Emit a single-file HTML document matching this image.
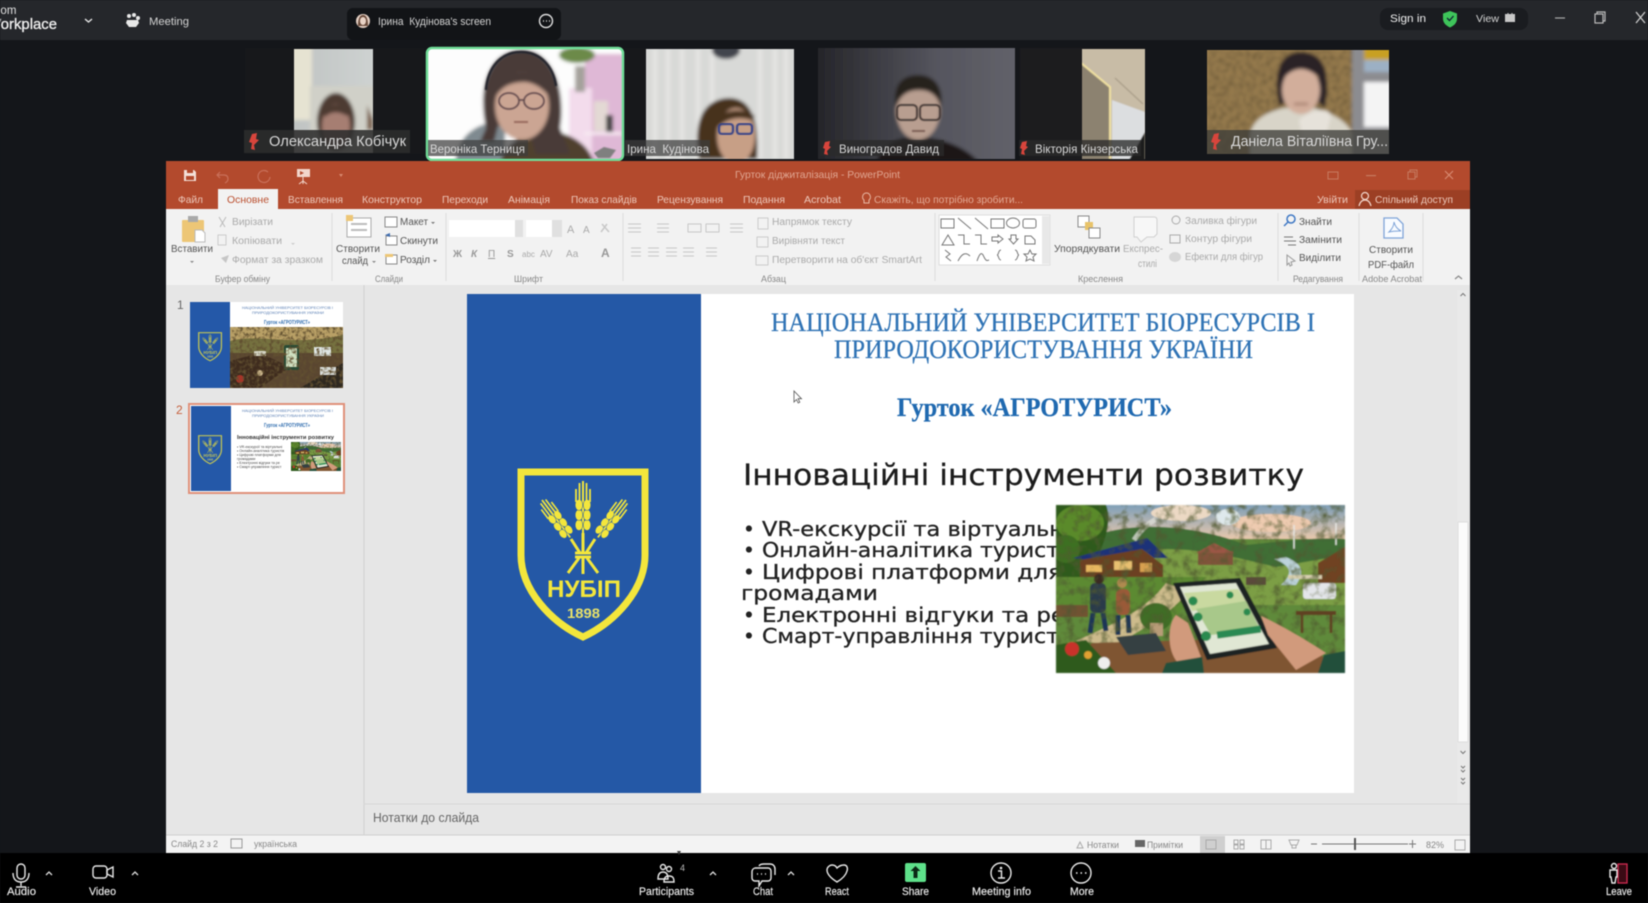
<!DOCTYPE html>
<html lang="uk"><head><meta charset="utf-8"><title>Zoom – PowerPoint</title>
<style>
html,body{margin:0;padding:0;background:#14161a;width:1648px;height:903px;overflow:hidden}
svg{display:block;filter:blur(.55px)}
text{font-family:"Liberation Sans","Noto Sans CJK SC",sans-serif;white-space:pre}
.z{fill:#d4d4d4;font-size:11px}
.w{fill:#f0f0f0;font-size:11px}
.n{fill:#d8d8d8;font-size:12px}
.t{fill:#edc8ba;font-size:10.5px}
.d{fill:#aaa;font-size:10px}
.k{fill:#555;font-size:10px}
.g{fill:#888;font-size:9px}
.s{font-family:"Liberation Serif",serif;fill:#2f73b5;font-size:26px;stroke:#2f73b5;stroke-width:.25}
.b{font-family:"DejaVu Sans",sans-serif;fill:#222;font-size:20px;stroke:#222;stroke-width:.3}
.l{fill:#eee;font-size:11px;stroke:#eee;stroke-width:.15}
.i{fill:none;stroke:#e8e8e8;stroke-width:1.4}
.r{fill:none;stroke:#aaa;stroke-width:1}
.rd{fill:none;stroke:#777;stroke-width:1}
.y{fill:none;stroke:#f3e63c}
</style></head><body>
<svg width="1648" height="903" viewBox="0 0 1648 903" xmlns="http://www.w3.org/2000/svg">
<defs>
<filter id="ph" x="-10%" y="-10%" width="120%" height="120%"><feGaussianBlur stdDeviation="1.8"/></filter>
<filter id="ph2" x="-10%" y="-10%" width="120%" height="120%"><feGaussianBlur stdDeviation=".6"/></filter>
<filter id="mot" x="0" y="0" width="100%" height="100%"><feTurbulence type="fractalNoise" baseFrequency=".11" numOctaves="3" seed="4"/><feColorMatrix values="0 0 0 0 .08  0 0 0 0 .1  0 0 0 0 .03  0 0 0 2.2 -1"/></filter>
<filter id="mot2" x="0" y="0" width="100%" height="100%"><feTurbulence type="fractalNoise" baseFrequency=".3" numOctaves="2" seed="9"/><feColorMatrix values="0 0 0 0 .12  0 0 0 0 .08  0 0 0 0 .03  0 0 0 3 -1.3"/></filter>
<clipPath id="c1"><rect x="294" y="49" width="79" height="104"/></clipPath>
<clipPath id="c2"><rect x="427" y="48" width="196" height="112" rx="5"/></clipPath>
<clipPath id="c3"><rect x="646" y="49" width="148" height="110"/></clipPath>
<clipPath id="c4"><rect x="818" y="48" width="197" height="111"/></clipPath>
<clipPath id="c5"><rect x="1082" y="49" width="63" height="110"/></clipPath>
<clipPath id="c6"><rect x="1207" y="50" width="182" height="104"/></clipPath>
<linearGradient id="sky" x1="0" y1="0" x2="0" y2="1"><stop offset="0" stop-color="#7f9fb8"/><stop offset="1" stop-color="#e8c8ac"/></linearGradient>
<linearGradient id="gr4" x1="0" y1="0" x2="1" y2="0"><stop offset="0" stop-color="#242428"/><stop offset=".6" stop-color="#55555e"/><stop offset="1" stop-color="#62626a"/></linearGradient>
<linearGradient id="wal" x1="0" y1="0" x2="1" y2="0"><stop offset="0" stop-color="#bfc3c2"/><stop offset="1" stop-color="#cfd3d2"/></linearGradient>
<g id="ear">
<path d="M0 0V52" stroke="#f3e63c" stroke-width="2" fill="none"/>
<g fill="#f3e63c" stroke="#2458a6" stroke-width=".5">
<ellipse cx="-4" cy="44" rx="3.8" ry="5.500"/><ellipse cx="4" cy="44" rx="3.800" ry="5.500"/>
<ellipse cx="-4" cy="34" rx="3.800" ry="5.500"/><ellipse cx="4" cy="34" rx="3.800" ry="5.500"/>
<ellipse cx="-4" cy="24" rx="3.800" ry="5.500"/><ellipse cx="4" cy="24" rx="3.800" ry="5.500"/>
</g>
<path d="M-7 21V8M-3.500 19V2M3.500 19V2M7 21V8" stroke="#f3e63c" stroke-width="1.800" fill="none"/>
</g>
<g id="shield">
<path d="M521 472H645V555C645 590 615 622 583 637C551 622 521 590 521 555Z" fill="none" stroke="#f3e63c" stroke-width="7"/>
<use href="#ear" transform="translate(583 481)"/>
<use href="#ear" transform="translate(542 500) rotate(-37) scale(.9)"/>
<use href="#ear" transform="translate(626 500) rotate(37) scale(.9)"/>
<path d="M571 539L580 553M595 539L586 553M583 533V553M575 553H591M575 557H591M579 558L568 573M583 558V574M587 558L598 573" class="y" stroke-width="3"/>
<text x="547" y="597" textLength="74" lengthAdjust="spacingAndGlyphs" style="font-size:24px;font-weight:bold;fill:#f3e63c">НУБІП</text>
<text x="567" y="618" textLength="33" lengthAdjust="spacingAndGlyphs" style="font-size:14px;font-weight:bold;fill:#e8e26a">1898</text>
</g>
<symbol id="scene" viewBox="0 0 289 168" preserveAspectRatio="none">
<rect width="289" height="168" fill="#5f8a3a"/>
<rect width="289" height="34" fill="url(#sky)"/>
<ellipse cx="125" cy="8" rx="30" ry="8" fill="#ecd9c4"/><ellipse cx="215" cy="18" rx="40" ry="9" fill="#eecbb0"/><ellipse cx="172" cy="12" rx="12" ry="8" fill="#dfe9ec"/>
<path d="M40 30C90 14 150 24 190 40C230 36 260 32 289 34V80H40Z" fill="#3f6e36"/>
<path d="M60 50C120 36 170 50 220 62L289 50V100H60Z" fill="#7b9e44"/>
<path d="M218 54C232 60 240 66 225 80L240 80C250 66 245 58 230 52Z" fill="#bcd3da"/>
<path d="M0 0H50C58 20 44 50 30 72H0Z" fill="#2f5a1c"/>
<ellipse cx="24" cy="18" rx="24" ry="18" fill="#5a8a2a"/><ellipse cx="10" cy="44" rx="14" ry="14" fill="#3e6f22"/>
<path d="M78 35C84 26 90 20 100 14" stroke="#dcdcd6" stroke-width="5" fill="none" opacity=".8"/>
<path d="M17 53L91 33L112 53H98L86 44L40 56Z" fill="#1f3278"/>
<path d="M24 55L86 44L107 60V72H24Z" fill="#6c3f20"/>
<rect x="30" y="60" width="16" height="7" fill="#e8b860"/><rect x="58" y="56" width="18" height="9" fill="#e8c070"/><rect x="84" y="58" width="12" height="9" fill="#d8a050"/>
<rect x="142" y="46" width="35" height="14" fill="#80533a"/><path d="M140 48L158 38L178 48Z" fill="#9b5644"/>
<path d="M262 58L289 42V78H262Z" fill="#6f4222"/>
<rect x="247" y="78" width="33" height="16" rx="3" fill="#e4e6ea"/>
<rect x="232" y="70" width="34" height="4" fill="#d8d0b0"/><rect x="190" y="72" width="20" height="8" fill="#5a4a3a"/>
<path d="M238 20V44M280 18V40" stroke="#e8e8e4" stroke-width="1.500"/>
<path d="M0 72H150L120 112H0Z" fill="#5c8a30"/>
<path d="M110 78C90 105 60 118 20 136L60 140C90 122 120 105 132 86Z" fill="#cdbb8c"/>
<path d="M0 100H32V112H0Z" fill="#6f5233"/>
<rect x="34" y="78" width="16" height="30" rx="5" fill="#2a3a4a"/><circle cx="43" cy="74" r="5" fill="#3a2a20"/><path d="M37 108L34 128M47 108L50 126" stroke="#1d3556" stroke-width="5"/>
<rect x="60" y="84" width="14" height="26" rx="5" fill="#9a5a38"/><circle cx="66" cy="78" r="5" fill="#b08a50"/><path d="M62 110L62 130M72 110L73 128" stroke="#1d3556" stroke-width="5"/>
<ellipse cx="100" cy="112" rx="16" ry="14" fill="#3f6d25"/><rect x="94" y="118" width="13" height="13" fill="#b89c78"/>
<rect width="289" height="168" filter="url(#mot)"/>
<path d="M36 138L240 132L289 168H0Z" fill="#7f5530"/>
<path d="M0 140L30 135L60 168H0Z" fill="#2f5a1c"/>
<circle cx="16" cy="144" r="7" fill="#c8322a"/><circle cx="32" cy="150" r="4" fill="#e0a030"/><circle cx="48" cy="158" r="6" fill="#eee"/>
<path d="M60 132L100 128L110 146L72 150Z" fill="#343f42"/>
<path d="M117 78L184 73L221 143L151 155Z" fill="#1c2024"/>
<path d="M124 82L180 78L213 139L154 149Z" fill="#e0e7d4"/>
<path d="M128 88L182 84L192 100L136 106Z" fill="#c9d9a0"/>
<path d="M140 104L190 96L204 124L155 130Z" fill="#a8c88a"/>
<circle cx="137" cy="96" r="4.500" fill="#2c8a50"/><circle cx="142" cy="112" r="4.500" fill="#2c8a50"/><circle cx="150" cy="131" r="5" fill="#2c8a50"/>
<rect x="161" y="124" width="44" height="7" fill="#2b8a52" transform="rotate(-8 180 128)"/>
<circle cx="174" cy="90" r="3.500" fill="#2c8a50"/><circle cx="191" cy="107" r="3.500" fill="#2c8a50"/>
<path d="M120 110C112 118 110 145 122 158L145 152L132 118Z" fill="#d19a7c"/>
<path d="M205 111C225 120 250 135 270 148L240 165L212 130Z" fill="#d19a7c"/>
<path d="M110 158L146 152L148 168H106ZM268 150L289 146V168H262Z" fill="#24503a"/>
<rect x="240" y="106" width="40" height="4" fill="#5f3f22"/><path d="M246 110V128M275 110V128" stroke="#5f3f22" stroke-width="2.500"/>
</symbol>
<symbol id="scene1" viewBox="0 0 113 61" preserveAspectRatio="none">
<rect width="113" height="61" fill="#5a4630"/>
<rect width="113" height="14" fill="#b9a066"/>
<path d="M0 14C30 6 60 20 113 8V26H0Z" fill="#75713f"/>
<path d="M0 34L30 26L60 40L30 61H0Z" fill="#3f2c1e"/>
<path d="M70 61L113 36V61Z" fill="#2e2820"/>
<circle cx="10" cy="52" r="4" fill="#a83428"/><circle cx="30" cy="46" r="3" fill="#c9b48a"/>
<rect x="54" y="18" width="15" height="25" rx="2" fill="#264a34"/><rect x="56" y="21" width="11" height="19" fill="#cfe0c0"/>
<rect x="84" y="20" width="17" height="9" fill="#dfe6e4"/><rect x="90" y="40" width="16" height="8" fill="#d8dcda"/>
<rect x="24" y="24" width="12" height="5" fill="#d8d8c8"/>
<rect width="113" height="61" filter="url(#mot2)"/>
</symbol>
</defs>

<!-- background -->
<rect width="1648" height="903" fill="#14161a"/>
<rect width="1648" height="40" fill="#25272b"/>
<rect x="347" y="8" width="214" height="32" rx="6" fill="#121417"/>
<rect x="1380" y="8" width="148" height="22" rx="8" fill="#1a1c20"/>

<!-- top bar -->
<text x="-13" y="14" style="font-size:11.500px;fill:#e0e0e0">Zoom</text>
<text x="-13" y="29" textLength="70" lengthAdjust="spacingAndGlyphs" style="font-size:14.500px;fill:#f0f0f0;stroke:#f0f0f0;stroke-width:.3">Workplace</text>
<path d="M85 19l3.500 3 3.500-3" class="i"/>
<g fill="#e8e8e8"><circle cx="129" cy="16" r="2"/><circle cx="134" cy="15" r="2"/><circle cx="138" cy="18" r="2"/><path d="M127 20h11l1 3-3 4h-7l-3-4z"/></g>
<text x="149" y="25" class="z" textLength="40" lengthAdjust="spacingAndGlyphs">Meeting</text>
<circle cx="363" cy="21" r="7" fill="#e3cfc3"/><path d="M358 26c0-8 2-11 5-11s5 3 5 11" fill="#694a3a"/><ellipse cx="363" cy="21" rx="3" ry="4" fill="#e8d2c5"/>
<text x="378" y="25" class="z" textLength="113" lengthAdjust="spacingAndGlyphs">Ірина  Кудінова's screen</text>
<circle cx="546" cy="21" r="6.500" fill="none" stroke="#ddd" stroke-width="1.400"/><path d="M543 21h1M546 21h1M549 21h1" stroke="#ddd" stroke-width="1.400"/>
<text x="1390" y="22" class="w" textLength="36" lengthAdjust="spacingAndGlyphs">Sign in</text>
<path d="M1450 11l7 2.500v5c0 4.500-3 7-7 9-4-2-7-4.500-7-9v-5z" fill="#3ec45a"/><path d="M1447 18l2.500 2.500 4-4.500" fill="none" stroke="#123" stroke-width="1.300"/>
<text x="1476" y="22" class="z" style="font-size:10px" textLength="23" lengthAdjust="spacingAndGlyphs">View</text>
<rect x="1505" y="14" width="10" height="8" fill="#c8c8c8"/><path d="M1508 13v2M1512 13v2" stroke="#c8c8c8" stroke-width="1"/>
<path d="M1555 18h10" stroke="#aaa" stroke-width="1.200"/>
<rect x="1595" y="14" width="8" height="9" fill="none" stroke="#bbb" stroke-width="1.200"/><path d="M1597 14v-2h8v9h-2" fill="none" stroke="#bbb" stroke-width="1.200"/>
<path d="M1636 12l9 11M1645 12l-9 11" stroke="#ccc" stroke-width="1.300"/>

<!-- tile 1 -->
<rect x="245" y="48" width="179" height="106" fill="#17181b"/>
<g clip-path="url(#c1)"><g filter="url(#ph)">
<rect x="290" y="45" width="90" height="112" fill="url(#wal)"/>
<rect x="288" y="45" width="24" height="75" fill="#e6e3d2"/>
<rect x="310" y="86" width="70" height="70" fill="#d0d0c8"/>
<ellipse cx="336" cy="122" rx="19" ry="29" fill="#4e3a30"/><ellipse cx="336" cy="126" rx="14" ry="22" fill="#a67e72"/>
<path d="M323 112c6-10 20-10 27-1l-3 5c-8-5-16-5-22 1z" fill="#4e3a30"/>
<path d="M367 105l6 15v10h-6z" fill="#7c6250"/>
</g></g>
<!-- tile 2 -->
<g clip-path="url(#c2)"><g filter="url(#ph)">
<rect x="423" y="44" width="204" height="120" fill="#fdfdfd"/>
<rect x="585" y="54" width="42" height="110" fill="#dfb8d6"/>
<rect x="569" y="88" width="23" height="74" fill="#f3dcec"/>
<rect x="575" y="66" width="10" height="26" fill="#a5a29c"/>
<ellipse cx="577" cy="55" rx="18" ry="8" fill="#6c8a48"/>
<rect x="594" y="101" width="14" height="30" fill="#e3d9d4"/><rect x="606" y="115" width="7" height="17" fill="#444"/><rect x="584" y="132" width="38" height="3" fill="#f7eaf2"/>
<path d="M455 164c2-22 12-34 30-40h20v40z" fill="#7f8a90"/>
<path d="M500 164c4-20 20-30 48-34 26 4 42 16 46 34z" fill="#50402f"/>
<path d="M486 128c-8-36 0-78 36-78 32 0 44 42 38 78l10 26h-34l-8-28h-30l-4 16h-14z" fill="#4a3b38"/>
<ellipse cx="522" cy="106" rx="27" ry="34" fill="#cba593"/>
<path d="M496 96c3-16 14-24 26-24s23 8 27 24c-8-10-18-14-25-14-12 0-22 4-28 14z" fill="#4a3b38"/>
</g>
<g filter="url(#ph2)">
<g fill="none" stroke="#5c4448" stroke-width="1.500"><ellipse cx="509" cy="101" rx="10" ry="8"/><ellipse cx="534" cy="101" rx="10" ry="8"/><path d="M519 100h5"/></g>
<path d="M514 122h14" stroke="#996a5e" stroke-width="2"/>
<path d="M486 90c2-24 16-38 35-38s32 14 35 34" fill="none" stroke="#23242a" stroke-width="2.500"/>
<path d="M594 153l10-6 12 3-6 8h-12z" fill="#7f7f7f"/>
</g></g>
<rect x="427" y="48" width="196" height="112" rx="5" fill="none" stroke="#70dd98" stroke-width="2.500"/>
<!-- tile 3 -->
<rect x="625" y="48" width="22" height="112" fill="#17181b"/>
<g clip-path="url(#c3)"><g filter="url(#ph)">
<rect x="642" y="45" width="156" height="118" fill="#d8d9d7"/>
<path d="M655 49v110M668 49v110M682 49v110M698 49v110M712 49v110M760 49v110M775 49v110M786 49v110" stroke="#e6e6e4" stroke-width="4"/>
<ellipse cx="726" cy="50" rx="14" ry="9" fill="#43454e"/>
<path d="M699 159c-6-34 2-60 30-61 24 0 30 26 28 61z" fill="#46301f"/>
<ellipse cx="736" cy="136" rx="19" ry="28" fill="#c79f86"/>
<path d="M715 122c6-12 26-16 40-6l-4 4c-12-4-24-2-34 8z" fill="#46301f"/>
</g>
<g filter="url(#ph2)"><g fill="none" stroke="#2a3b88" stroke-width="2"><rect x="719" y="124" width="14" height="10" rx="3"/><rect x="737" y="124" width="15" height="10" rx="3"/></g></g></g>
<!-- tile 4 -->
<g clip-path="url(#c4)"><g filter="url(#ph)">
<rect x="814" y="44" width="205" height="120" fill="url(#gr4)"/>
<path d="M876 162c6-16 18-22 28-24h26c18 3 36 10 49 24z" fill="#1c1917"/>
<ellipse cx="918" cy="110" rx="22" ry="30" fill="#b89e90"/>
<path d="M896 108c-4-20 4-33 22-33s26 14 23 33c-3-12-10-18-22-18-12 0-20 6-23 18z" fill="#27201d"/>
</g>
<g filter="url(#ph2)"><g fill="none" stroke="#3f3630" stroke-width="1.800"><rect x="897" y="105" width="20" height="15" rx="4"/><rect x="920" y="105" width="20" height="15" rx="4"/></g>
<path d="M912 131h13" stroke="#7e6258" stroke-width="2"/></g></g>
<!-- tile 5 -->
<rect x="1020" y="48" width="125" height="112" fill="#1c1c1e"/>
<g clip-path="url(#c5)"><g filter="url(#ph2)">
<rect x="1078" y="45" width="70" height="118" fill="#c8bca6"/>
<path d="M1078 62l32 24v76h-32z" fill="#8c8270"/>
<path d="M1081 63l29 24v72" fill="none" stroke="#f2e2a2" stroke-width="2"/>
<path d="M1112 100l33 12v30l-15 20h-18z" fill="#dcdee0"/>
<path d="M1115 78l28 26" stroke="#a09480" stroke-width="1"/>
<path d="M1128 162l17-30v30z" fill="#1a1a1a"/>
</g></g>
<!-- tile 6 -->
<g clip-path="url(#c6)"><g filter="url(#ph)">
<rect x="1203" y="46" width="190" height="112" fill="#9a7e50"/>
<rect x="1207" y="50" width="145" height="104" filter="url(#mot2)"/>
<rect x="1352" y="46" width="40" height="112" fill="#8c8c90"/>
<rect x="1364" y="82" width="28" height="45" fill="#f4f4f4"/>
<rect x="1364" y="46" width="28" height="14" fill="#c8a020"/><rect x="1364" y="60" width="28" height="12" fill="#9cb0c4"/>
<path d="M1250 134c3-14 16-22 34-26h30c14 4 34 12 38 26v24h-102z" fill="#d8d4c8"/>
<path d="M1279 106c-6-32 0-54 22-54 24 0 30 22 24 56l-7-6v-30h-31l-1 30z" fill="#2b2326"/>
<ellipse cx="1301" cy="90" rx="19" ry="24" fill="#d2ae9b"/>
<path d="M1282 80c4-12 11-20 19-20 10 0 18 8 21 20-8-8-15-11-21-11-6 0-13 3-19 11z" fill="#2b2326"/>
<path d="M1294 104h14" stroke="#9a6e60" stroke-width="2"/>
<path d="M1299 120c10-10 30-14 32-4l-6 24h-22z" fill="#e6e2da"/>
</g></g>
<!-- labels -->
<rect x="244" y="130" width="166" height="23" fill="#2c2c2c" opacity=".88"/>
<rect x="428" y="140" width="100" height="16" fill="#3d3d3d" opacity=".72"/>
<rect x="625" y="140" width="85" height="16" fill="#3d3d3d" opacity=".72"/>
<rect x="820" y="140" width="124" height="16" fill="#2a2a2a" opacity=".78"/>
<rect x="1019" y="140" width="122" height="16" fill="#2a2a2a" opacity=".78"/>
<rect x="1207" y="130" width="182" height="24" fill="#3e3e3a" opacity=".78"/>
<g fill="#d8453c">
<path d="M252 134l5-1-1 6 3 1-5 5 1 5-4-1 1-6-3-1z"/>
<path d="M825 142l5-1-1 5 2 1-4 4 1 4-4-1 1-5-2-1z"/>
<path d="M1022 142l5-1-1 5 2 1-4 4 1 4-4-1 1-5-2-1z"/>
<path d="M1214 134l5-1-1 6 3 1-5 5 1 5-4-1 1-6-3-1z"/>
</g>
<text x="269" y="146" class="n" style="font-size:15px" textLength="137" lengthAdjust="spacingAndGlyphs">Олександра Кобічук</text>
<text x="430" y="153" class="n" textLength="95" lengthAdjust="spacingAndGlyphs">Вероніка Терниця</text>
<text x="627" y="153" class="n" textLength="82" lengthAdjust="spacingAndGlyphs">Ірина  Кудінова</text>
<text x="839" y="153" class="n" textLength="100" lengthAdjust="spacingAndGlyphs">Виноградов Давид</text>
<text x="1035" y="153" class="n" textLength="103" lengthAdjust="spacingAndGlyphs">Вікторія Кінзерська</text>
<text x="1231" y="146" class="n" style="font-size:15px" textLength="157" lengthAdjust="spacingAndGlyphs">Даніела Віталіївна Гру...</text>

<!-- PowerPoint window -->
<rect x="166" y="161" width="1304" height="692" fill="#e6e6e6"/>
<rect x="166" y="161" width="1304" height="49" fill="#b34a2d"/>
<rect x="1355" y="190" width="115" height="20" fill="#9c3f24"/>
<rect x="166" y="209" width="1304" height="76" fill="#f2f2f2"/>
<rect x="218" y="189" width="60" height="21" fill="#f2f2f2"/>
<!-- qat -->
<path d="M184 170h10l2 2v9h-12z" fill="#f3e0d8"/><rect x="186" y="176" width="8" height="4" fill="#b34a2d"/><rect x="187" y="170" width="6" height="3" fill="#b34a2d"/>
<path d="M220 172l-3 3 3 3M217 175h7c3 0 4 2 4 4s-1 3-3 4" fill="none" stroke="#c9705a" stroke-width="1.200"/>
<path d="M268 172a6 6 0 1 0 2 5" fill="none" stroke="#c9705a" stroke-width="1.200"/>
<rect x="297" y="169" width="13" height="8" fill="#f2d6cb"/><path d="M303 177v7M299 184l4-3 4 3" stroke="#f2d6cb" fill="none"/><path d="M300 171l4 2-4 2" fill="#b34a2d"/>
<path d="M339 174h4l-2 3z" fill="#d88a70"/>
<text x="735" y="178" textLength="165" lengthAdjust="spacingAndGlyphs" style="font-size:10.500px;fill:#e0a692">Гурток діджиталізація - PowerPoint</text>
<rect x="1328" y="172" width="10" height="7" fill="none" stroke="#c67a60"/><rect x="1366" y="175" width="10" height="1.200" fill="#c67a60"/>
<rect x="1408" y="172" width="7" height="7" fill="none" stroke="#c67a60"/><path d="M1410 172v-2h7v7h-2" fill="none" stroke="#c67a60"/>
<path d="M1445 171l8 8M1453 171l-8 8" stroke="#d88a70" stroke-width="1.200"/>
<!-- tabs -->
<text class="t" x="178" y="203" textLength="25" lengthAdjust="spacingAndGlyphs">Файл</text>
<text x="227" y="203" textLength="42" lengthAdjust="spacingAndGlyphs" style="font-size:10.500px;fill:#bb5030">Основне</text>
<text class="t" x="288" y="203" textLength="55" lengthAdjust="spacingAndGlyphs">Вставлення</text>
<text class="t" x="362" y="203" textLength="60" lengthAdjust="spacingAndGlyphs">Конструктор</text>
<text class="t" x="442" y="203" textLength="46" lengthAdjust="spacingAndGlyphs">Переходи</text>
<text class="t" x="508" y="203" textLength="42" lengthAdjust="spacingAndGlyphs">Анімація</text>
<text class="t" x="571" y="203" textLength="66" lengthAdjust="spacingAndGlyphs">Показ слайдів</text>
<text class="t" x="657" y="203" textLength="66" lengthAdjust="spacingAndGlyphs">Рецензування</text>
<text class="t" x="743" y="203" textLength="42" lengthAdjust="spacingAndGlyphs">Подання</text>
<text class="t" x="804" y="203" textLength="37" lengthAdjust="spacingAndGlyphs">Acrobat</text>
<text x="874" y="203" textLength="149" lengthAdjust="spacingAndGlyphs" style="font-size:10.500px;fill:#e2a994">Скажіть, що потрібно зробити...</text>
<text class="t" x="1317" y="203" textLength="31" lengthAdjust="spacingAndGlyphs">Увійти</text>
<text class="t" x="1375" y="203" textLength="78" lengthAdjust="spacingAndGlyphs">Спільний доступ</text>
<path d="M866 193a4 4 0 0 1 3 7v3h-5v-3a4 4 0 0 1 2-7z" fill="none" stroke="#e8b8a4"/>
<circle cx="1365" cy="196" r="3.500" fill="none" stroke="#f2d6cb" stroke-width="1.200"/><path d="M1359 206c1-4 3-6 6-6s5 2 6 6" fill="none" stroke="#f2d6cb" stroke-width="1.200"/>
<!-- separators -->
<path d="M332 213v68M446 213v68M623 213v68M935 213v68M1278 213v68M1359 213v68M1423 213v68" stroke="#dcdcdc"/>
<!-- clipboard group -->
<rect x="182" y="220" width="22" height="22" rx="1" fill="#edc676"/><rect x="188" y="216" width="10" height="6" fill="#a9a9a9"/><path d="M195 230h7l3 3v9h-10z" fill="#fff" stroke="#bbb"/>
<text x="171" y="252" class="k" textLength="42" lengthAdjust="spacingAndGlyphs">Вставити</text>
<path d="M190 261h4l-2 2z" fill="#888"/>
<path d="M219 217l6 10M226 217l-6 10" stroke="#bbb"/><rect x="218" y="235" width="8" height="10" fill="none" stroke="#ccc"/><path d="M221 258l8-3-3 8z" fill="#c6c6c6"/>
<text x="232" y="225" class="d" textLength="41" lengthAdjust="spacingAndGlyphs">Вирізати</text>
<text x="232" y="244" class="d" textLength="50" lengthAdjust="spacingAndGlyphs">Копіювати</text>
<text x="232" y="263" class="d" textLength="91" lengthAdjust="spacingAndGlyphs">Формат за зразком</text>
<path d="M291 243h4l-2 2z" fill="#ccc"/>
<text x="215" y="282" class="g" textLength="55" lengthAdjust="spacingAndGlyphs">Буфер обміну</text>
<!-- slides group -->
<rect x="347" y="218" width="24" height="19" fill="#fff" stroke="#aaa"/><path d="M351 224h16M351 230h16" stroke="#bbb" stroke-width="2"/><rect x="346" y="215" width="7" height="6" fill="#edc676"/>
<text x="336" y="252" class="k" textLength="44" lengthAdjust="spacingAndGlyphs">Створити</text>
<text x="342" y="264" class="k" textLength="26" lengthAdjust="spacingAndGlyphs">слайд</text>
<path d="M372 261h4l-2 2z" fill="#888"/>
<rect x="385" y="217" width="12" height="10" fill="#fff" stroke="#888"/><rect x="386" y="236" width="11" height="9" fill="#fff" stroke="#888"/><path d="M385 235l5-2v4z" fill="#3f6db0"/><rect x="386" y="255" width="11" height="9" fill="#fff" stroke="#888"/><rect x="385" y="254" width="8" height="3" fill="#edc676"/>
<text x="400" y="225" class="k" textLength="28" lengthAdjust="spacingAndGlyphs">Макет</text>
<text x="400" y="244" class="k" textLength="38" lengthAdjust="spacingAndGlyphs">Скинути</text>
<text x="400" y="263" class="k" textLength="30" lengthAdjust="spacingAndGlyphs">Розділ</text>
<path d="M431 222h4l-2 2zM433 260h4l-2 2z" fill="#777"/>
<text x="375" y="282" class="g" textLength="28" lengthAdjust="spacingAndGlyphs">Слайди</text>
<!-- font group -->
<rect x="449" y="220" width="66" height="17" fill="#fff"/><rect x="515" y="220" width="8" height="17" fill="#e0e0e0"/>
<rect x="526" y="220" width="26" height="17" fill="#fff"/><rect x="552" y="220" width="10" height="17" fill="#e0e0e0"/>
<text x="567" y="233" class="d" style="font-size:11px">A</text><text x="583" y="233" class="d" style="font-size:10px">A</text>
<path d="M602 224l7 8M601 232l6-8" stroke="#c8c8c8" stroke-width="1.500"/>
<text x="453" y="257" class="d" font-weight="bold" style="fill:#999">Ж</text><text x="471" y="257" class="d" font-style="italic" font-weight="bold" style="fill:#999">К</text><text x="488" y="257" class="d" text-decoration="underline" style="fill:#999">П</text><text x="507" y="257" class="d" font-weight="bold" style="fill:#999">S</text><text x="522" y="257" class="d" style="font-size:8px">abc</text><text x="540" y="257" class="d">AV</text><text x="566" y="257" class="d">Аа</text><text x="601" y="257" font-weight="bold" style="font-size:12px;fill:#999">А</text>
<text x="514" y="282" class="g" textLength="29" lengthAdjust="spacingAndGlyphs">Шрифт</text>
<!-- paragraph group -->
<g stroke="#c8c8c8" fill="none">
<path d="M628 224h13M628 228h13M628 232h13M657 224h12M657 228h12M657 232h12M688 224h13v8h-13zM706 224h13v8h-13zM730 224h13M730 228h13M730 232h13"/>
<path d="M631 248h10M631 252h10M631 256h10M648 248h11M648 252h11M648 256h11M666 248h11M666 252h11M666 256h11M683 248h11M683 252h11M683 256h11M706 248h11M706 252h11M706 256h11"/>
</g>
<rect x="758" y="218" width="10" height="11" fill="none" stroke="#ccc"/><rect x="757" y="237" width="11" height="10" fill="none" stroke="#ccc"/><rect x="756" y="256" width="12" height="9" fill="none" stroke="#ccc"/>
<text x="772" y="225" class="d" textLength="80" lengthAdjust="spacingAndGlyphs">Напрямок тексту</text>
<text x="772" y="244" class="d" textLength="73" lengthAdjust="spacingAndGlyphs">Вирівняти текст</text>
<text x="772" y="263" class="d" textLength="150" lengthAdjust="spacingAndGlyphs">Перетворити на об'єкт SmartArt</text>
<text x="761" y="282" class="g" textLength="25" lengthAdjust="spacingAndGlyphs">Абзац</text>
<!-- shapes gallery -->
<rect x="939" y="215" width="111" height="50" fill="#fff" stroke="#ddd"/>
<rect x="1042" y="216" width="8" height="48" fill="#e8e8e8"/>
<g class="rd">
<rect x="941" y="219" width="13" height="9"/>
<path d="M958 218l13 11M975 218l13 11"/>
<rect x="991" y="219" width="13" height="9"/><ellipse cx="1013" cy="223" rx="6.500" ry="5"/><rect x="1023" y="219" width="13" height="9" rx="2"/>
<path d="M942 245l6-10 6 10zM958 235h6v9h6M975 235h6v9h6M992 237h6v-2l5 4-5 4v-2h-6zM1011 235h5v4h2l-4.500 5-4.500-5h2zM1025 236h6l4 4v4h-10z"/>
<path d="M945 250l5 4-4 3 5 4M958 261c4-8 8-9 12-5M977 261c3-9 5-9 7-4 2 4 3 4 5 3M1001 250c-3 0-2 5-4 5 2 0 1 5 4 5M1015 250c3 0 2 5 4 5-2 0-1 5-4 5M1030 250l2 4h4l-3 3 1 4-4-2-4 2 1-4-3-3h4z"/>
</g>
<text x="1054" y="252" class="k" textLength="66" lengthAdjust="spacingAndGlyphs">Упорядкувати</text>
<rect x="1078" y="216" width="11" height="11" fill="#fff" stroke="#888"/><rect x="1085" y="222" width="8" height="8" fill="#e8c36a"/><rect x="1089" y="228" width="11" height="10" fill="#fff" stroke="#888"/>
<path d="M1134 217h20c2 0 3 1 3 3v14l-3 3h-7l-6 5-4-5h-3z" fill="#f7f7f7" stroke="#d0d0d0"/>
<text x="1123" y="252" class="d" textLength="40" lengthAdjust="spacingAndGlyphs">Експрес-</text>
<text x="1138" y="267" class="d" textLength="19" lengthAdjust="spacingAndGlyphs">стилі</text>
<text x="1185" y="224" class="d" textLength="72" lengthAdjust="spacingAndGlyphs">Заливка фігури</text>
<text x="1185" y="242" class="d" textLength="67" lengthAdjust="spacingAndGlyphs">Контур фігури</text>
<text x="1185" y="260" class="d" textLength="78" lengthAdjust="spacingAndGlyphs">Ефекти для фігур</text>
<circle cx="1176" cy="220" r="4" class="r"/><rect x="1170" y="235" width="10" height="8" class="r"/><ellipse cx="1175" cy="257" rx="6" ry="5" fill="#d6d6d6"/>
<text x="1078" y="282" class="g" textLength="45" lengthAdjust="spacingAndGlyphs">Креслення</text>
<!-- edit group -->
<circle cx="1291" cy="219" r="4" fill="none" stroke="#3f78c4" stroke-width="1.500"/><path d="M1288 222l-4 4" stroke="#3f78c4" stroke-width="1.500"/>
<path d="M1284 237h9M1284 241h12M1288 245h8" stroke="#777"/>
<path d="M1287 255l8 6-4 1 1 3-2 1-1-3-2 2z" fill="none" stroke="#999"/>
<text x="1299" y="225" class="k" textLength="33" lengthAdjust="spacingAndGlyphs">Знайти</text>
<text x="1299" y="243" class="k" textLength="43" lengthAdjust="spacingAndGlyphs">Замінити</text>
<text x="1299" y="261" class="k" textLength="42" lengthAdjust="spacingAndGlyphs">Виділити</text>
<text x="1293" y="282" class="g" textLength="50" lengthAdjust="spacingAndGlyphs">Редагування</text>
<path d="M1384 218h13l6 6v14h-19z" fill="#f8fbff" stroke="#7fa4d8" stroke-width="1.300"/><path d="M1389 232c3-3 5-7 5-10 1 4 3 7 7 9-4 0-8 0-12 1z" fill="none" stroke="#7fa4d8"/>
<text x="1369" y="253" class="k" textLength="44" lengthAdjust="spacingAndGlyphs">Створити</text>
<text x="1368" y="268" class="k" textLength="46" lengthAdjust="spacingAndGlyphs">PDF-файл</text>
<text x="1362" y="282" class="g" textLength="60" lengthAdjust="spacingAndGlyphs">Adobe Acrobat</text>
<path d="M1455 279l3.500-3 3.500 3" fill="none" stroke="#888" stroke-width="1.200"/>

<!-- work area -->
<rect x="166" y="285" width="198" height="519" fill="#e6e6e6"/>
<path d="M364 285V836" stroke="#d2d2d2"/>
<!-- thumb 1 -->
<text x="177" y="309" style="font-size:12px;fill:#666">1</text>
<rect x="190" y="302" width="153" height="86" fill="#fff"/>
<rect x="190" y="302" width="40" height="86" fill="#2458a8"/>
<use href="#shield" transform="translate(198 332) scale(.183 .17) translate(-517 -468)" opacity=".75"/>
<use href="#scene1" x="230" y="327" width="113" height="61"/>
<text x="242" y="309" textLength="91" lengthAdjust="spacingAndGlyphs" style="font-size:4px;fill:#5a7fb4">НАЦІОНАЛЬНИЙ УНІВЕРСИТЕТ БІОРЕСУРСІВ І</text>
<text x="252" y="314" textLength="72" lengthAdjust="spacingAndGlyphs" style="font-size:4px;fill:#5a7fb4">ПРИРОДОКОРИСТУВАННЯ УКРАЇНИ</text>
<text x="264" y="324" textLength="46" lengthAdjust="spacingAndGlyphs" style="font-size:5px;font-weight:bold;fill:#2c6aad">Гурток «АГРОТУРИСТ»</text>
<!-- thumb 2 -->
<text x="176" y="414" style="font-size:12px;fill:#c6603c">2</text>
<rect x="189" y="404" width="155" height="89" fill="#fff" stroke="#e0917a" stroke-width="2"/>
<rect x="191" y="406" width="40" height="85" fill="#2458a8"/>
<use href="#shield" transform="translate(198 435) scale(.183 .17) translate(-517 -468)" opacity=".75"/>
<text x="242" y="412" textLength="91" lengthAdjust="spacingAndGlyphs" style="font-size:4px;fill:#5a7fb4">НАЦІОНАЛЬНИЙ УНІВЕРСИТЕТ БІОРЕСУРСІВ І</text>
<text x="252" y="417" textLength="72" lengthAdjust="spacingAndGlyphs" style="font-size:4px;fill:#5a7fb4">ПРИРОДОКОРИСТУВАННЯ УКРАЇНИ</text>
<text x="264" y="427" textLength="46" lengthAdjust="spacingAndGlyphs" style="font-size:5px;font-weight:bold;fill:#2c6aad">Гурток «АГРОТУРИСТ»</text>
<text x="237" y="439" textLength="97" lengthAdjust="spacingAndGlyphs" style="font-size:5px;font-weight:bold;fill:#333">Інноваційні інструменти розвитку</text>
<text x="237" y="448" style="font-size:3.600px;fill:#444">• VR-екскурсії та віртуальні</text>
<text x="237" y="452" style="font-size:3.600px;fill:#444">• Онлайн-аналітика туристів</text>
<text x="237" y="456" style="font-size:3.600px;fill:#444">• Цифрові платформи для</text>
<text x="237" y="460" style="font-size:3.600px;fill:#444">громадами</text>
<text x="237" y="464" style="font-size:3.600px;fill:#444">• Електронні відгуки та ре</text>
<text x="237" y="468" style="font-size:3.600px;fill:#444">• Смарт-управління турист</text>
<use href="#scene" x="291" y="442" width="50" height="29"/>

<!-- slide -->
<rect x="467" y="294" width="887" height="499" fill="#fff"/>
<rect x="467" y="294" width="234" height="499" fill="#2458a6"/>
<use href="#shield"/>
<text class="s" x="771" y="331" textLength="544" lengthAdjust="spacingAndGlyphs">НАЦІОНАЛЬНИЙ УНІВЕРСИТЕТ БІОРЕСУРСІВ І</text>
<text class="s" x="834" y="358" textLength="419" lengthAdjust="spacingAndGlyphs">ПРИРОДОКОРИСТУВАННЯ УКРАЇНИ</text>
<text class="s" x="897" y="416" textLength="275" lengthAdjust="spacingAndGlyphs" style="font-weight:bold;fill:#1f69b0;stroke:#1f69b0;font-size:26px">Гурток «АГРОТУРИСТ»</text>
<text class="b" x="743" y="485" textLength="561" lengthAdjust="spacingAndGlyphs" style="font-size:29px;fill:#1c1c1c">Інноваційні інструменти розвитку</text>
<text class="b" x="743" y="536">•</text><text class="b" x="762" y="536" textLength="302" lengthAdjust="spacingAndGlyphs">VR-екскурсії та віртуальн</text>
<text class="b" x="743" y="557">•</text><text class="b" x="762" y="557" textLength="297" lengthAdjust="spacingAndGlyphs">Онлайн-аналітика турист</text>
<text class="b" x="743" y="579">•</text><text class="b" x="762" y="579" textLength="300" lengthAdjust="spacingAndGlyphs">Цифрові платформи для</text>
<text class="b" x="741" y="600" textLength="137" lengthAdjust="spacingAndGlyphs">громадами</text>
<text class="b" x="743" y="622">•</text><text class="b" x="762" y="622" textLength="303" lengthAdjust="spacingAndGlyphs">Електронні відгуки та ре</text>
<text class="b" x="743" y="643">•</text><text class="b" x="762" y="643" textLength="297" lengthAdjust="spacingAndGlyphs">Смарт-управління турист</text>
<g filter="url(#ph2)"><use href="#scene" x="1056" y="505" width="289" height="168"/></g>
<!-- cursor -->
<path d="M794 391v11l2.500-2.500 1.700 3.500 1.600-.8-1.700-3.500h3.400z" fill="#fff" stroke="#555" stroke-width=".8"/>

<!-- scrollbar -->
<rect x="1457" y="290" width="11" height="514" fill="#e9e9e9"/>
<rect x="1458" y="522" width="10" height="220" fill="#fbfbfb" stroke="#ddd"/>
<path d="M1460.500 296l2.500-2.500 2.500 2.500M1460.500 751l2.500 2.500 2.500-2.500M1461 766l2 2 2-2M1461 770l2 2 2-2M1461 778l2 2 2-2M1461 782l2 2 2-2" fill="none" stroke="#777"/>

<!-- notes & status -->
<path d="M364 804H1470" stroke="#d6d6d6"/>
<text x="373" y="822" textLength="106" lengthAdjust="spacingAndGlyphs" style="font-size:12.500px;fill:#666">Нотатки до слайда</text>
<rect x="166" y="835" width="1304" height="18" fill="#f3f3f3"/>
<path d="M166 835H1470" stroke="#d0d0d0"/>
<text x="171" y="847" class="g" textLength="47" lengthAdjust="spacingAndGlyphs">Слайд 2 з 2</text>
<rect x="231" y="839" width="11" height="9" fill="none" stroke="#999"/>
<text x="254" y="847" class="g" textLength="43" lengthAdjust="spacingAndGlyphs">українська</text>
<path d="M1077 848l3-6 3 6z" class="r"/>
<text x="1087" y="848" class="g" textLength="32" lengthAdjust="spacingAndGlyphs">Нотатки</text>
<rect x="1135" y="840" width="10" height="7" fill="#666"/>
<text x="1147" y="848" class="g" textLength="36" lengthAdjust="spacingAndGlyphs">Примітки</text>
<rect x="1200" y="836" width="25" height="17" fill="#cfcfcf"/>
<rect x="1206" y="840" width="10" height="9" class="r"/>
<path d="M1234 840h4v4h-4zM1240 840h4v4h-4zM1234 845h4v4h-4zM1240 845h4v4h-4z" class="r"/>
<rect x="1261" y="840" width="10" height="9" class="r"/><path d="M1266 840v9" class="r"/>
<path d="M1289 840h10l-2 5h-6zM1292 845v3h4v-3" class="r"/>
<path d="M1311 844h6M1322 844H1408M1409 844h7M1412.500 840v8" stroke="#777" fill="none"/>
<path d="M1355 838v12" stroke="#555" stroke-width="2"/>
<text x="1426" y="848" class="g">82%</text>
<rect x="1455" y="840" width="10" height="10" class="r"/>

<!-- bottom bar -->
<rect y="853" width="1648" height="50" fill="#000"/>
<path d="M677 851h4l-2 4z" fill="#444"/>
<rect x="17" y="864" width="8" height="15" rx="4" fill="none" stroke="#e8e8e8" stroke-width="1.400"/><path d="M13 873c0 6 3 9 8 9s8-3 8-9M21 882v4M16 887h10" class="i"/>
<path d="M46 875l3-3 3 3M132 875l3-3 3 3M710 875l3-3 3 3M788 875l3-3 3 3" fill="none" stroke="#ddd" stroke-width="1.300"/>
<text x="7" y="895" class="l" textLength="29" lengthAdjust="spacingAndGlyphs">Audio</text>
<rect x="93" y="866" width="14" height="12" rx="3" class="i"/><path d="M107 870l6-3v10l-6-3z" class="i"/>
<text x="89" y="895" class="l" textLength="27" lengthAdjust="spacingAndGlyphs">Video</text>
<circle cx="663" cy="867" r="2.500" class="i"/><circle cx="669" cy="869" r="2.500" class="i"/><path d="M658 879c0-5 2-7 5-7s5 2 5 7zM664 882c0-5 2-6 5-6s5 1 5 6z" class="i"/>
<text x="680" y="871" style="font-size:9px;fill:#bbb">4</text>
<text x="639" y="895" class="l" textLength="55" lengthAdjust="spacingAndGlyphs">Participants</text>
<path d="M755 868h13a3 3 0 0 1 3 3v7a3 3 0 0 1-3 3h-6l-3 5v-5h-4a3 3 0 0 1-3-3v-6a4 4 0 0 1 3-4z" class="i"/><path d="M759 866c1-2 3-2 5-2h6c3 0 5 2 5 5v6" class="i"/><path d="M757 874h1M761 874h1M765 874h1" stroke="#eee" stroke-width="1.400"/>
<text x="753" y="895" class="l" textLength="20" lengthAdjust="spacingAndGlyphs">Chat</text>
<path d="M837 882c-8-5-10-9-10-12 0-3 3-5 5-5 2 0 4 1 5 3 2-2 5-3 7-3 3 0 4 3 3 6-1 4-5 8-10 11z" class="i"/>
<text x="825" y="895" class="l" textLength="24" lengthAdjust="spacingAndGlyphs">React</text>
<rect x="905" y="863" width="21" height="19" rx="2" fill="#5ee08a"/><path d="M915.500 866l-5 5h3v7h4v-7h3z" fill="#0b2815"/>
<text x="902" y="895" class="l" textLength="27" lengthAdjust="spacingAndGlyphs">Share</text>
<circle cx="1001" cy="873" r="10" class="i"/><circle cx="1001" cy="868" r="1.300" fill="#eee"/><path d="M998 871h3.500v7M998 878h7" class="i"/>
<text x="972" y="895" class="l" textLength="59" lengthAdjust="spacingAndGlyphs">Meeting info</text>
<circle cx="1081" cy="873" r="10" class="i"/><path d="M1076 873h1.500M1080.500 873h1.500M1085 873h1.500" stroke="#eee" stroke-width="1.600"/>
<text x="1070" y="895" class="l" textLength="24" lengthAdjust="spacingAndGlyphs">More</text>
<rect x="1618" y="864" width="9" height="19" fill="#3a0a14" stroke="#d02a50" stroke-width="1.300"/>
<circle cx="1614" cy="866" r="2.500" class="i"/><path d="M1610 870h7v7h-1l-1 6h-3l-1-6h-1z" class="i"/>
<text x="1606" y="895" class="l" textLength="26" lengthAdjust="spacingAndGlyphs">Leave</text>
</svg>
</body></html>
